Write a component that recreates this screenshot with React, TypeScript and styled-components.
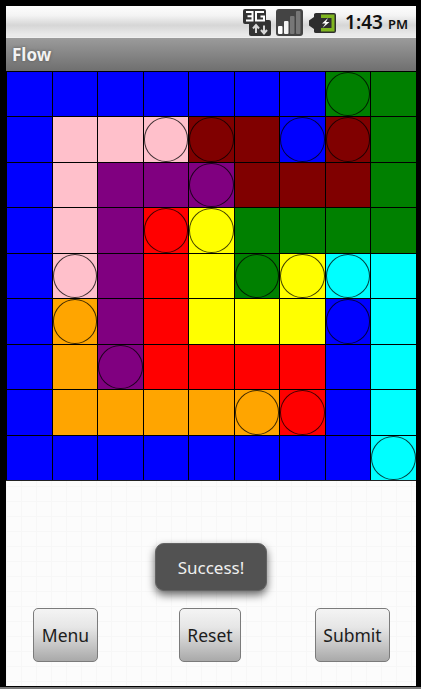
import styled, { createGlobalStyle } from "styled-components";

const GlobalStyle = createGlobalStyle`
  html, body {
    margin: 0;
    padding: 0;
    background: #000;
  }
  * { box-sizing: border-box; }
`;

const COLORS: Record<string, string> = {
  B: "#0000ff",
  G: "#008000",
  P: "#ffc0cb",
  M: "#800000",
  U: "#800080",
  R: "#ff0000",
  Y: "#ffff00",
  C: "#00ffff",
  O: "#ffa500",
};

// lower case = cell holds an end point of that colour
const BOARD = [
  "BBBBBBBgG",
  "BPPpmMbmG",
  "BPUUuMMMG",
  "BPUryGGGG",
  "BpURYgycC",
  "BoURYYYbC",
  "BOuRRRRBC",
  "BOOOOorBC",
  "BBBBBBBBc",
];

const Device = styled.div`
  position: relative;
  width: 421px;
  height: 689px;
  padding: 6px 5px 0 6px;
  background: #000;
  font-family: "Noto Sans", "Open Sans", sans-serif;
  overflow: hidden;

  &::after {
    content: "";
    position: absolute;
    left: 0;
    right: 0;
    bottom: 0;
    height: 2px;
    background: #777;
  }
`;

const Screen = styled.div`
  position: relative;
  display: flex;
  flex-direction: column;
  height: 680px;
  background-color: #fcfcfc;
  background-image:
    linear-gradient(#f7f7f7 1px, transparent 1px),
    linear-gradient(90deg, #f7f7f7 1px, transparent 1px);
  background-size: 15px 15px;
`;

const StatusBar = styled.div`
  display: flex;
  align-items: center;
  justify-content: flex-end;
  height: 32px;
  padding: 2px 8px 0 0;
  background: linear-gradient(#fdfdfd 0%, #f4f4f4 30%, #d6d6d6 62%, #e9e9e9 92%);
  border-bottom: 1px solid #efefef;
`;

const StatusIcon = styled.svg<{ $gap?: number }>`
  display: block;
  flex: none;
  margin-left: ${(p) => p.$gap ?? 0}px;
`;

const Clock = styled.div`
  display: flex;
  align-items: baseline;
  margin-left: 9px;
  color: #111;
  font-size: 19px;
  font-weight: 600;
  line-height: 24px;
`;

const ClockSuffix = styled.span`
  margin-left: 5px;
  font-size: 13px;
`;

const TitleBar = styled.div`
  display: flex;
  align-items: center;
  height: 33px;
  padding: 0 0 1px 6px;
  background: linear-gradient(#9b9b9b, #6f6f6f);
  color: #f2f2f2;
  font-size: 17px;
  font-weight: 700;
  text-shadow: 0 0 3px #555;
`;

const Board = styled.div`
  display: grid;
  grid-template-columns: repeat(9, 1fr);
  grid-template-rows: repeat(9, 1fr);
  width: 410px;
  height: 410px;
  border-bottom: 1px solid #222;
`;

const Cell = styled.div<{ $fill: string }>`
  display: flex;
  border-top: 1px solid #000;
  border-left: 1px solid #000;
  background: ${(p) => p.$fill};
`;

const Dot = styled.div`
  flex: 1;
  border: 1px solid rgba(0, 0, 0, 0.75);
  border-radius: 50%;
`;

const ButtonBar = styled.div`
  display: grid;
  grid-template-columns: 146px auto 1fr;
  margin-top: auto;
  padding: 0 26px 24px 27px;
`;

const PhoneButton = styled.button<{ $width: number; $align: string }>`
  justify-self: ${(p) => p.$align};
  width: ${(p) => p.$width}px;
  height: 54px;
  padding: 0;
  border: 1px solid #7b7b7b;
  border-radius: 5px;
  background: linear-gradient(#f4f4f4 0%, #e6e6e6 35%, #c6c6c6 70%, #a9a9a9 100%);
  color: #1c1c1c;
  font-family: inherit;
  font-size: 17.5px;
`;

const Toast = styled.div`
  position: absolute;
  left: 149px;
  top: 537px;
  display: flex;
  align-items: center;
  justify-content: center;
  width: 112px;
  height: 48px;
  border: 1px solid #636363;
  border-radius: 9px;
  background: #525252;
  box-shadow: 0 4px 8px rgba(0, 0, 0, 0.6);
  color: #efefef;
  font-size: 17px;
`;

function NetworkIcon() {
  return (
    <StatusIcon width="28" height="27" viewBox="0 0 28 27">
      <rect x="0" y="0" width="23" height="15" rx="2" fill="#333" />
      <rect x="6" y="11" width="22" height="16" rx="2" fill="#333" />
      <path d="M3 3h6.500v8.500H3M4.500 7.200h5M21 3h-8v8.500h8V7.500h-3.500" fill="none" stroke="#fff" strokeWidth="2" />
      <path d="M13 24v-7M10 19.500l3-3.500 3 3.500M21 16.500v7M18 21l3 3.500 3-3.500" fill="none" stroke="#d8d8d8" strokeWidth="2" />
    </StatusIcon>
  );
}

function SignalIcon() {
  return (
    <StatusIcon width="27" height="27" viewBox="0 0 27 27" $gap={5}>
      <rect x="0" y="0" width="27" height="27" rx="3" fill="#444" />
      <rect x="2" y="17" width="4.500" height="8" rx="1" fill="#fff" />
      <rect x="8" y="12" width="4.500" height="13" rx="1" fill="#f4f4f4" />
      <rect x="14" y="7" width="4.500" height="18" rx="1" fill="#777" />
      <rect x="20" y="2" width="4.500" height="23" rx="1" fill="#777" />
    </StatusIcon>
  );
}

function BatteryIcon() {
  return (
    <StatusIcon width="27" height="20" viewBox="0 0 27 20" $gap={6}>
      <path d="M0 7.500L5 4V1.500Q5 0 7 0H25Q27 0 27 2V18Q27 20 25 20H7Q5 20 5 18.500V16L0 12.500z" fill="#2e2e2e" />
      <path d="M12 1.500H25.500V18.500H12V15H22.500V5H12z" fill="#7fb51f" />
      <path d="M19 5l-6 5.500h3.500L13.500 15l7-6h-3.500z" fill="#fff" />
    </StatusIcon>
  );
}

export default function App() {
  return (
    <Device>
      <GlobalStyle />
      <Screen>
        <StatusBar>
          <NetworkIcon />
          <SignalIcon />
          <BatteryIcon />
          <Clock>
            1:43<ClockSuffix>PM</ClockSuffix>
          </Clock>
        </StatusBar>
        <TitleBar>Flow</TitleBar>
        <Board>
          {BOARD.flatMap((row, y) =>
            row.split("").map((ch, x) => (
              <Cell key={`${x}-${y}`} $fill={COLORS[ch.toUpperCase()]}>
                {ch === ch.toLowerCase() && <Dot />}
              </Cell>
            ))
          )}
        </Board>
        <ButtonBar>
          <PhoneButton $width={65} $align="start">Menu</PhoneButton>
          <PhoneButton $width={62} $align="center">Reset</PhoneButton>
          <PhoneButton $width={75} $align="end">Submit</PhoneButton>
        </ButtonBar>
        <Toast>Success!</Toast>
      </Screen>
    </Device>
  );
}
